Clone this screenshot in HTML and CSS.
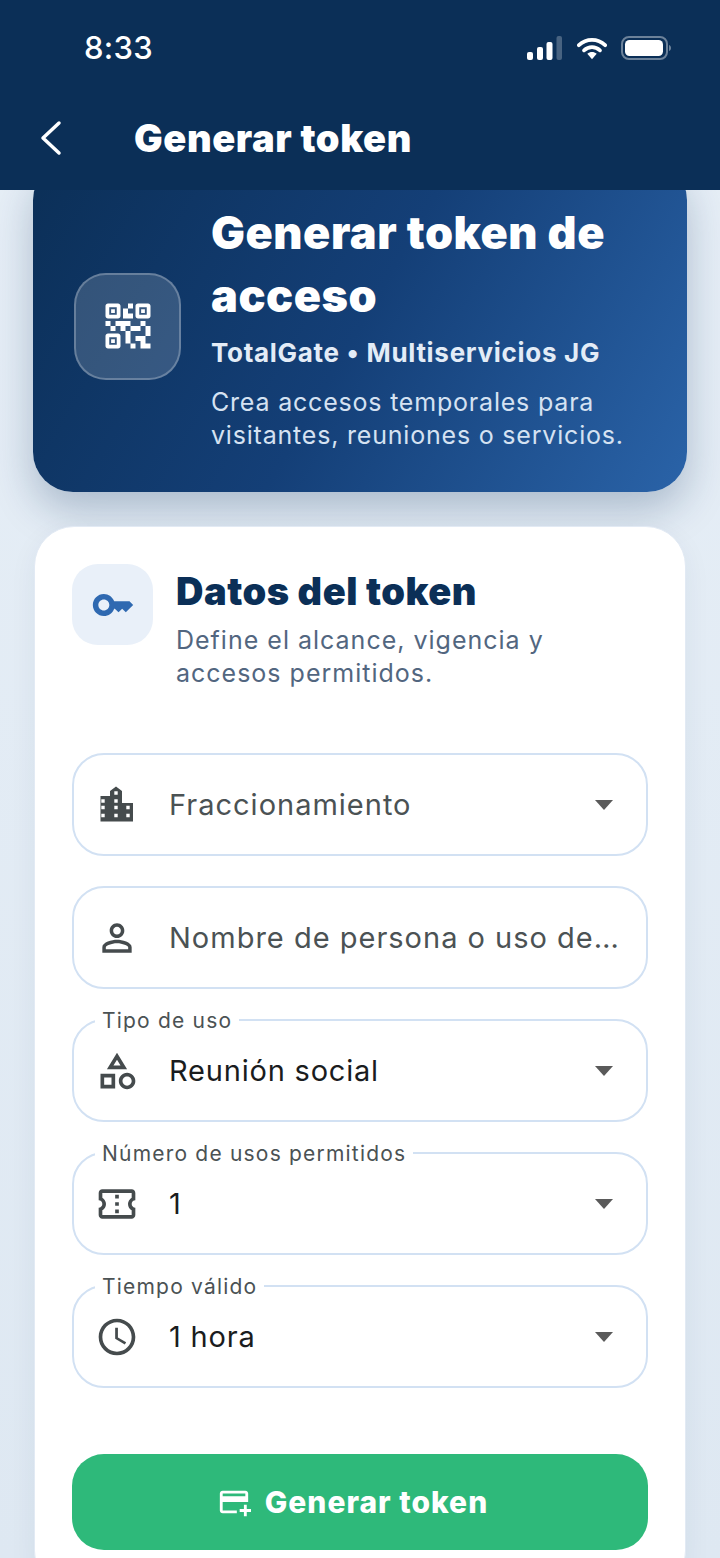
FILE: index.html
```html
<!DOCTYPE html>
<html lang="es">
<head>
    <meta charset="UTF-8">
    <meta name="viewport" content="width=device-width, initial-scale=1.0">
    <title>Generar token</title>
    <link rel="stylesheet" href="styles.css">
</head>
<body>
    <div class="screen">
        <!-- App bar with status bar -->
        <header class="app-header">
            <div class="status-bar">
                <span class="status-time">8:33</span>
                <div class="status-icons">
                    <svg class="icon-signal" viewBox="0 0 36 24" width="36" height="24">
                        <rect x="0" y="16" width="6" height="8" rx="2" fill="#fff"/>
                        <rect x="10" y="11" width="6" height="13" rx="2" fill="#fff"/>
                        <rect x="19.500" y="6" width="6" height="18" rx="2" fill="#fff"/>
                        <rect x="29.500" y="0" width="5.500" height="24" rx="2" fill="#fff" opacity="0.25"/>
                    </svg>
                    <svg class="icon-wifi" viewBox="0 0 32 24" width="30" height="23">
                        <path d="M2 8.500C10 1 22 1 30 8.500" fill="none" stroke="#fff" stroke-width="4" stroke-linecap="round"/>
                        <path d="M7.500 14C12.500 9.500 19.500 9.500 24.500 14" fill="none" stroke="#fff" stroke-width="4" stroke-linecap="round"/>
                        <path d="M11 17.500C14 15 18 15 21 17.500L16 23.500Z" fill="#fff"/>
                    </svg>
                    <svg class="icon-battery" viewBox="0 0 50 24" width="50" height="24">
                        <rect x="1" y="1" width="45" height="22" rx="7" fill="none" stroke="#fff" stroke-opacity="0.4" stroke-width="2"/>
                        <rect x="4" y="4" width="38" height="16" rx="4.500" fill="#fff"/>
                        <path d="M48 9c1.500.5 2 1.800 2 3s-.5 2.500-2 3z" fill="#fff" opacity="0.4"/>
                    </svg>
                </div>
            </div>
            <div class="nav-bar">
                <svg class="back-icon" viewBox="0 0 24 36" width="24" height="36">
                    <path d="M21 3L5 18l16 15" fill="none" stroke="#fff" stroke-width="3.500" stroke-linecap="round" stroke-linejoin="round"/>
                </svg>
                <h1 class="nav-title">Generar token</h1>
            </div>
        </header>

        <main class="content">
            <!-- Summary card -->
            <section class="hero">
                <div class="hero-icon">
                    <svg viewBox="0 0 24 24" width="60" height="60" fill="#fff">
                        <path d="M15 21h-2v-2h2v2zm-2-7h-2v5h2v-5zm8-2h-2v4h2v-4zm-2-2h-2v2h2v-2zM7 12H5v2h2v-2zm-2-2H3v2h2v-2zm7-5h2V3h-2v2zm-7.500-.5v3h3v-3h-3zM8 9H4c-.55 0-1-.45-1-1V4c0-.55.45-1 1-1h4c.55 0 1 .45 1 1v4c0 .55-.45 1-1 1zm-3.500 7.500v3h3v-3h-3zM8 21H4c-.55 0-1-.45-1-1v-4c0-.55.45-1 1-1h4c.55 0 1 .45 1 1v4c0 .55-.45 1-1 1zm8.500-16.500v3h3v-3h-3zM20 9h-4c-.55 0-1-.45-1-1V4c0-.55.45-1 1-1h4c.55 0 1 .45 1 1v4c0 .55-.45 1-1 1zm-1 10v-3h-4v2h2v3h4v-2h-2zm-2-7h-4v2h4v-2zm-4-2H7v2h2v2h2v-2h2v-2zm1-1V7h-2V5h-2v4h4zM6.750 5.250h-1.500v1.500h1.500v-1.500zm0 12h-1.500v1.500h1.500v-1.500zm12-12h-1.500v1.500h1.500v-1.500z"/>
                    </svg>
                </div>
                <div class="hero-text">
                    <h2 class="hero-title">Generar token de acceso</h2>
                    <p class="hero-org">TotalGate • Multiservicios JG</p>
                    <p class="hero-desc">Crea accesos temporales para visitantes, reuniones o servicios.</p>
                </div>
            </section>

            <!-- Token form -->
            <section class="form-card">
                <div class="form-head">
                    <div class="form-head-icon">
                        <svg viewBox="0 0 24 24" width="44" height="44" fill="#2f69b1">
                            <path d="M21 10h-8.350C11.830 7.670 9.610 6 7 6c-3.310 0-6 2.690-6 6s2.690 6 6 6c2.610 0 4.830-1.670 5.650-4H13l2 2 2-2 2 2 4-4.040L21 10zM7 15c-1.650 0-3-1.350-3-3s1.350-3 3-3 3 1.350 3 3-1.350 3-3 3z"/>
                        </svg>
                    </div>
                    <div>
                        <h2 class="form-title">Datos del token</h2>
                        <p class="form-subtitle">Define el alcance, vigencia y accesos permitidos.</p>
                    </div>
                </div>

                <div class="fields">
                    <div class="field">
                        <svg class="field-icon" viewBox="0 0 44 44">
                            <path fill-rule="evenodd" d="M5.500 38.500V13h9.500V8l6-4.500L27 8v12h11v18.500zM19.300 8.300v3.400h3.400V8.300zM6.300 16.300v3.400h3.400v-3.400zm13 0v3.400h3.400v-3.400zM6.300 22.800v3.400h3.400v-3.400zm13 0v3.400h3.400v-3.400zm12 0v3.400h3.400v-3.400zM6.300 30.800v3.400h3.400v-3.400zm13 0v3.400h3.400v-3.400zm12 0v3.400h3.400v-3.400z" fill="#454b4d"/>
                        </svg>
                        <span class="field-text field-placeholder">Fraccionamiento</span>
                        <span class="field-arrow"></span>
                    </div>
                    <div class="field">
                        <svg class="field-icon" viewBox="0 0 24 24">
                            <path d="M12 5.900c1.160 0 2.100.94 2.100 2.100s-.94 2.100-2.100 2.100S9.900 9.160 9.900 8s.94-2.100 2.100-2.100m0 9c2.970 0 6.100 1.460 6.100 2.100v1.100H5.900V17c0-.64 3.130-2.100 6.100-2.100M12 4C9.790 4 8 5.790 8 8s1.790 4 4 4 4-1.790 4-4-1.790-4-4-4zm0 9c-2.670 0-8 1.340-8 4v3h16v-3c0-2.660-5.330-4-8-4z" fill="#454b4d"/>
                        </svg>
                        <span class="field-text field-placeholder">Nombre de persona o uso de…</span>
                    </div>
                    <div class="field">
                        <span class="field-label">Tipo de uso</span>
                        <svg class="field-icon" viewBox="0 0 24 24">
                            <path d="M12 2l-5.500 9h11L12 2zm0 3.840L13.930 9h-3.870L12 5.840zM17.500 13c-2.490 0-4.500 2.010-4.500 4.500s2.010 4.500 4.500 4.500 4.500-2.010 4.500-4.500-2.010-4.500-4.500-4.500zm0 7c-1.380 0-2.500-1.120-2.500-2.500s1.120-2.500 2.500-2.500 2.500 1.120 2.500 2.500-1.120 2.500-2.500 2.500zM3 21.500h8v-8H3v8zm2-6h4v4H5v-4z" fill="#454b4d"/>
                        </svg>
                        <span class="field-text">Reunión social</span>
                        <span class="field-arrow"></span>
                    </div>
                    <div class="field">
                        <span class="field-label">Número de usos permitidos</span>
                        <svg class="field-icon" viewBox="0 0 24 24">
                            <path d="M22 10V6c0-1.110-.9-2-2-2H4c-1.100 0-1.990.89-1.990 2v4c1.100 0 1.990.9 1.990 2s-.89 2-2 2v4c0 1.100.9 2 2 2h16c1.100 0 2-.9 2-2v-4c-1.100 0-2-.9-2-2s.9-2 2-2zm-2-1.460c-1.190.69-2 1.990-2 3.460s.81 2.770 2 3.460V18H4v-2.540c1.190-.69 2-1.990 2-3.460 0-1.480-.8-2.770-1.990-3.460L4 6h16v2.540zM11 15h2v2h-2zm0-4h2v2h-2zm0-4h2v2h-2z" fill="#454b4d"/>
                        </svg>
                        <span class="field-text">1</span>
                        <span class="field-arrow"></span>
                    </div>
                    <div class="field">
                        <span class="field-label">Tiempo válido</span>
                        <svg class="field-icon" viewBox="0 0 24 24">
                            <path d="M11.990 2C6.470 2 2 6.480 2 12s4.470 10 9.990 10C17.520 22 22 17.520 22 12S17.520 2 11.990 2zM12 20c-4.420 0-8-3.580-8-8s3.580-8 8-8 8 3.580 8 8-3.580 8-8 8zm.5-13H11v6l5.250 3.150.75-1.230-4.500-2.670z" fill="#454b4d"/>
                        </svg>
                        <span class="field-text">1 hora</span>
                        <span class="field-arrow"></span>
                    </div>
                </div>

                <button class="btn-generate">
                    <svg viewBox="0 0 24 24" width="34" height="34" fill="#fff">
                        <path d="M20 4H4c-1.110 0-1.990.89-1.990 2L2 18c0 1.110.89 2 2 2h10v-2H4v-6h18V6c0-1.110-.89-2-2-2zm0 4H4V6h16v2zm4 9v2h-3v3h-2v-3h-3v-2h3v-3h2v3h3z"/>
                    </svg>
                    Generar token
                </button>
            </section>
        </main>
    </div>
</body>
</html>
```

FILE: styles.css
```css
* {
    box-sizing: border-box;
}

body {
    margin: 0;
    font-family: Inter, "Noto Sans", sans-serif;
}

.screen {
    display: flex;
    flex-direction: column;
    height: 1558px;
    overflow: hidden;
    background: linear-gradient(180deg, #e7eff7 0%, #dee8f2 100%);
}

.app-header {
    position: relative;
    z-index: 2;
    flex: none;
    height: 190px;
    background-color: #0b2f57;
    color: #fff;
}

.status-bar {
    display: flex;
    justify-content: space-between;
    align-items: center;
    height: 96px;
    padding: 0 49px 0 84px;
}

.status-time {
    margin-bottom: 2px;
    font-size: 31px;
    font-weight: 500;
    letter-spacing: 0.3px;
}

.status-icons {
    display: flex;
    align-items: center;
    gap: 14px;
}

.status-icons svg {
    display: block;
}

.nav-bar {
    display: flex;
    align-items: center;
    height: 84px;
    padding-left: 38px;
}

.back-icon {
    flex: none;
}

.nav-title {
    margin: 0 0 0 72px;
    font-size: 38px;
    font-weight: 900;
    letter-spacing: 0.6px;
}

.content {
    flex: 1;
    min-height: 0;
}

.hero {
    display: flex;
    align-items: center;
    gap: 30px;
    width: 654px;
    height: 332px;
    margin: -30px 0 0 33px;
    padding: 0 40px 0 41px;
    border-radius: 40px;
    background: linear-gradient(120deg, #0b2f57 0%, #143f77 50%, #2a63a8 100%);
    box-shadow: 0 18px 40px rgba(11, 47, 87, 0.26);
    color: #fff;
}

.hero-icon {
    display: flex;
    flex: none;
    align-items: center;
    justify-content: center;
    width: 107px;
    height: 107px;
    border: 2px solid rgba(255, 255, 255, 0.25);
    border-radius: 32px;
    background-color: rgba(255, 255, 255, 0.16);
}

.hero-title {
    margin: 0;
    font-size: 45px;
    font-weight: 900;
    line-height: 63px;
    letter-spacing: 0.55px;
}

.hero-org {
    margin: 9px 0 0;
    font-size: 26px;
    font-weight: 700;
    line-height: 34px;
    letter-spacing: 0.7px;
    color: #e3ecf7;
}

.hero-desc {
    margin: 16px 0 0;
    font-size: 25px;
    line-height: 33px;
    letter-spacing: 0.8px;
    color: #d5e2f2;
}

.form-card {
    width: 652px;
    margin: 34px 0 0 34px;
    padding: 37px 37px 40px;
    border: 1px solid #e2eaf4;
    border-radius: 40px;
    background-color: #fff;
    box-shadow: 0 8px 28px rgba(11, 47, 87, 0.06);
}

.form-head {
    display: flex;
    gap: 23px;
}

.form-head-icon {
    display: flex;
    flex: none;
    align-items: center;
    justify-content: center;
    width: 81px;
    height: 81px;
    border-radius: 26px;
    background-color: #e9f0f9;
}

.form-title {
    margin: 0;
    font-size: 38px;
    font-weight: 900;
    line-height: 54px;
    letter-spacing: 0.5px;
    color: #0b2f57;
}

.form-subtitle {
    margin: 6px 0 0;
    font-size: 25px;
    line-height: 33px;
    letter-spacing: 1px;
    color: #52667f;
}

.fields {
    display: flex;
    flex-direction: column;
    gap: 30px;
    margin-top: 63px;
}

.field {
    position: relative;
    display: flex;
    align-items: center;
    height: 103px;
    padding: 0 24px 0 21px;
    border: 2px solid #d2e1f3;
    border-radius: 32px;
}

.field-icon {
    flex: none;
    width: 44px;
    height: 44px;
    margin-right: 30px;
}

.field-text {
    flex: 1;
    white-space: nowrap;
    font-size: 29px;
    letter-spacing: 0.8px;
    color: #1a1c1e;
}

.field-placeholder {
    letter-spacing: 1px;
    color: #4b5254;
}

.field-arrow {
    flex: none;
    width: 0;
    height: 0;
    margin-right: 9px;
    border-top: 10px solid #5a5a5a;
    border-right: 9.500px solid transparent;
    border-left: 9.500px solid transparent;
}

.field-label {
    position: absolute;
    top: -13px;
    left: 21px;
    padding: 0 7px;
    background-color: #fff;
    font-size: 21px;
    line-height: 26px;
    letter-spacing: 1.2px;
    color: #4b5254;
}

.btn-generate {
    display: flex;
    align-items: center;
    justify-content: center;
    gap: 14px;
    width: 100%;
    height: 96px;
    margin-top: 66px;
    padding: 0 15px 0 0;
    border: none;
    border-radius: 32px;
    background-color: #2eb97a;
    font-family: inherit;
    font-size: 30px;
    font-weight: 800;
    letter-spacing: 1px;
    color: #fff;
}
```
